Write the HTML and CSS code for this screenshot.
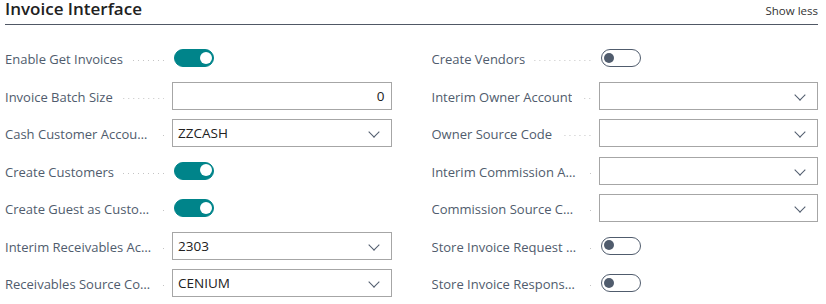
FILE: index.html
```html
<!DOCTYPE html>
<html lang="en">
<head>
    <meta charset="UTF-8">
    <meta name="viewport" content="width=device-width, initial-scale=1.0">
    <title>Invoice Interface</title>
    <link rel="stylesheet" href="styles.css">
</head>
<body>
    <div class="fasttab">
        <div class="tab-header">
            <h2>Invoice Interface</h2>
            <a href="#" class="show-less">Show less</a>
        </div>

        <div class="fields">
            <!-- Left column -->
            <div class="column">
                <div class="field">
                    <div class="caption"><span class="caption-text">Enable Get Invoices</span><span class="leader"></span></div>
                    <div class="control"><span class="toggle on"></span></div>
                </div>
                <div class="field">
                    <div class="caption"><span class="caption-text">Invoice Batch Size</span><span class="leader"></span></div>
                    <div class="control"><div class="input number">0</div></div>
                </div>
                <div class="field">
                    <div class="caption"><span class="caption-text">Cash Customer Account No.</span><span class="leader"></span></div>
                    <div class="control"><div class="input select">ZZCASH</div></div>
                </div>
                <div class="field">
                    <div class="caption"><span class="caption-text">Create Customers</span><span class="leader"></span></div>
                    <div class="control"><span class="toggle on"></span></div>
                </div>
                <div class="field">
                    <div class="caption"><span class="caption-text">Create Guest as Customer</span><span class="leader"></span></div>
                    <div class="control"><span class="toggle on"></span></div>
                </div>
                <div class="field">
                    <div class="caption"><span class="caption-text">Interim Receivables Account</span><span class="leader"></span></div>
                    <div class="control"><div class="input select">2303</div></div>
                </div>
                <div class="field">
                    <div class="caption"><span class="caption-text">Receivables Source Code</span><span class="leader"></span></div>
                    <div class="control"><div class="input select">CENIUM</div></div>
                </div>
            </div>

            <!-- Right column -->
            <div class="column">
                <div class="field">
                    <div class="caption"><span class="caption-text">Create Vendors</span><span class="leader"></span></div>
                    <div class="control"><span class="toggle"></span></div>
                </div>
                <div class="field">
                    <div class="caption"><span class="caption-text">Interim Owner Account</span><span class="leader"></span></div>
                    <div class="control"><div class="input select"></div></div>
                </div>
                <div class="field">
                    <div class="caption"><span class="caption-text">Owner Source Code</span><span class="leader"></span></div>
                    <div class="control"><div class="input select"></div></div>
                </div>
                <div class="field">
                    <div class="caption"><span class="caption-text">Interim Commission Account</span><span class="leader"></span></div>
                    <div class="control"><div class="input select"></div></div>
                </div>
                <div class="field">
                    <div class="caption"><span class="caption-text">Commission Source Code</span><span class="leader"></span></div>
                    <div class="control"><div class="input select"></div></div>
                </div>
                <div class="field">
                    <div class="caption"><span class="caption-text">Store Invoice Request Messages</span><span class="leader"></span></div>
                    <div class="control"><span class="toggle"></span></div>
                </div>
                <div class="field">
                    <div class="caption"><span class="caption-text">Store Invoice Response Messages</span><span class="leader"></span></div>
                    <div class="control"><span class="toggle"></span></div>
                </div>
            </div>
        </div>
    </div>
</body>
</html>
```

FILE: styles.css
```css
* {
    margin: 0;
    padding: 0;
    box-sizing: border-box;
}

body {
    font-family: 'Open Sans', 'Noto Sans', sans-serif;
    background: white;
    padding: 0 8px 0 5px;
}

.tab-header {
    display: flex;
    justify-content: space-between;
    align-items: flex-end;
    height: 25px;
    border-bottom: 1px solid #505865;
    padding-bottom: 5px;
}

.tab-header h2 {
    font-size: 17px;
    font-weight: 600;
    color: #212121;
    line-height: 20px;
}

.show-less {
    font-size: 11.5px;
    color: #333333;
    text-decoration: none;
    line-height: 14px;
    margin-bottom: 1px;
}

.fields {
    display: grid;
    grid-template-columns: 1fr 1fr;
    column-gap: 40px;
    margin-top: 19px;
}

.column {
    display: flex;
    flex-direction: column;
    gap: 9.5px;
}

.field {
    display: flex;
    align-items: center;
    height: 28px;
}

.caption {
    width: 167px;
    flex-shrink: 0;
    display: flex;
    align-items: center;
    padding-right: 8px;
    padding-top: 2px;
    font-size: 13px;
    color: #505c6d;
}

.caption-text {
    white-space: nowrap;
    overflow: hidden;
    text-overflow: ellipsis;
    max-width: 150px;
}

.leader {
    flex: 1;
    min-width: 1px;
    height: 1px;
    margin-left: 9px;
    margin-top: 3px;
    background-image: linear-gradient(to left, #c4c4c4 0 1px, transparent 1px 5px);
    background-size: 5px 1px;
    background-position: right;
    background-repeat: repeat-x;
}

.control {
    flex: 1;
    display: flex;
    align-items: center;
}

.input {
    width: 100%;
    height: 28px;
    border: 1px solid #a6a6a6;
    font-size: 13.5px;
    color: #212121;
    line-height: 26px;
    padding: 0 6px 0 5px;
    position: relative;
}

.input.number {
    text-align: right;
}

.input.select::after {
    content: "";
    position: absolute;
    right: 13px;
    top: 8px;
    width: 7px;
    height: 7px;
    border-right: 1px solid #505c6d;
    border-bottom: 1px solid #505c6d;
    transform: rotate(45deg);
}

.toggle {
    display: inline-block;
    position: relative;
    width: 40px;
    height: 18px;
    margin-left: 2px;
    border-radius: 9px;
    border: 1.5px solid #505c6d;
}

.toggle::after {
    content: "";
    position: absolute;
    top: 2.5px;
    left: 2.5px;
    width: 10px;
    height: 10px;
    border-radius: 50%;
    background: #505c6d;
}

.toggle.on {
    background: #00848a;
    border-color: #00848a;
}

.toggle.on::after {
    left: auto;
    right: 1.5px;
    top: 1.5px;
    width: 12px;
    height: 12px;
    background: white;
}
```
